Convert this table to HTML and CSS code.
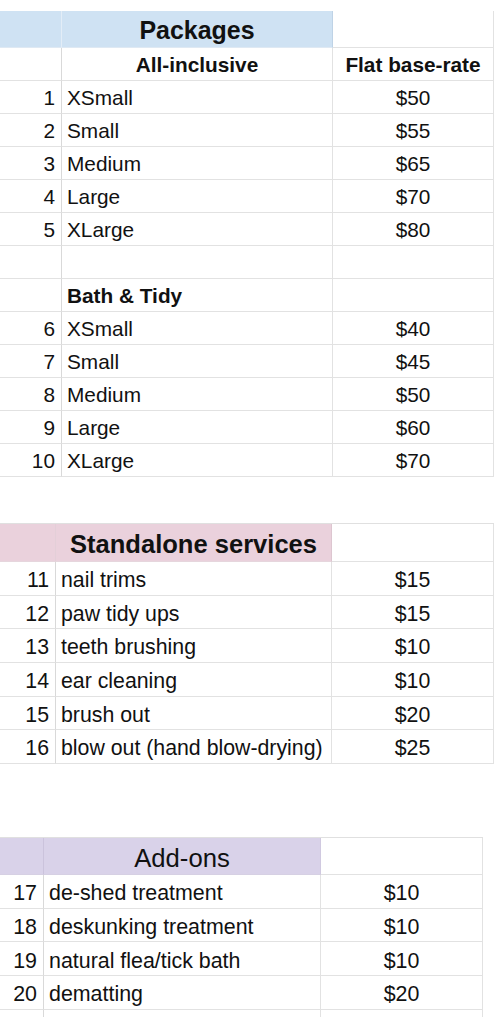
FILE: index.html
```html
<!DOCTYPE html>
<html lang="en">
<head>
<meta charset="utf-8">
<title>Grooming prices</title>
<link rel="stylesheet" href="styles.css">
</head>
<body>
<div class="sheet">
  <section class="block block--packages">
    <div class="cell num fill-blue head-div-blue"></div>
    <div class="cell title fill-blue edge-blue">Packages</div>
    <div class="cell price"></div>

    <div class="cell num"></div>
    <div class="cell sub">All-inclusive</div>
    <div class="cell sub">Flat base-rate</div>

    <div class="cell num">1</div><div class="cell label">XSmall</div><div class="cell price">$50</div>
    <div class="cell num">2</div><div class="cell label">Small</div><div class="cell price">$55</div>
    <div class="cell num">3</div><div class="cell label">Medium</div><div class="cell price">$65</div>
    <div class="cell num">4</div><div class="cell label">Large</div><div class="cell price">$70</div>
    <div class="cell num">5</div><div class="cell label">XLarge</div><div class="cell price">$80</div>

    <div class="cell num"></div><div class="cell label"></div><div class="cell price"></div>
    <div class="cell num"></div><div class="cell label strong">Bath &amp; Tidy</div><div class="cell price"></div>

    <div class="cell num">6</div><div class="cell label">XSmall</div><div class="cell price">$40</div>
    <div class="cell num">7</div><div class="cell label">Small</div><div class="cell price">$45</div>
    <div class="cell num">8</div><div class="cell label">Medium</div><div class="cell price">$50</div>
    <div class="cell num">9</div><div class="cell label">Large</div><div class="cell price">$60</div>
    <div class="cell num">10</div><div class="cell label">XLarge</div><div class="cell price">$70</div>
  </section>

  <section class="block block--standalone">
    <div class="cell num fill-pink head-div-pink"></div>
    <div class="cell title fill-pink edge-pink">Standalone services</div>
    <div class="cell price"></div>

    <div class="cell num">11</div><div class="cell label">nail trims</div><div class="cell price">$15</div>
    <div class="cell num">12</div><div class="cell label">paw tidy ups</div><div class="cell price">$15</div>
    <div class="cell num">13</div><div class="cell label">teeth brushing</div><div class="cell price">$10</div>
    <div class="cell num">14</div><div class="cell label">ear cleaning</div><div class="cell price">$10</div>
    <div class="cell num">15</div><div class="cell label">brush out</div><div class="cell price">$20</div>
    <div class="cell num">16</div><div class="cell label">blow out (hand blow-drying)</div><div class="cell price">$25</div>
  </section>

  <section class="block block--addons">
    <div class="cell num fill-purple head-div-purple"></div>
    <div class="cell title title--plain fill-purple edge-purple">Add-ons</div>
    <div class="cell price"></div>

    <div class="cell num">17</div><div class="cell label">de-shed treatment</div><div class="cell price">$10</div>
    <div class="cell num">18</div><div class="cell label">deskunking treatment</div><div class="cell price">$10</div>
    <div class="cell num">19</div><div class="cell label">natural flea/tick bath</div><div class="cell price">$10</div>
    <div class="cell num">20</div><div class="cell label">dematting</div><div class="cell price">$20</div>

    <div class="cell num stub"></div><div class="cell label stub"></div><div class="cell price stub"></div>
  </section>
</div>
</body>
</html>
```

FILE: styles.css
```css
* {
  box-sizing: border-box;
}

body {
  margin: 0;
  background: #ffffff;
  font-family: "Liberation Sans", Arial, sans-serif;
  color: #111111;
}

.sheet {
  width: 496px;
  padding-top: 11px;
}

.block {
  display: grid;
  width: max-content;
}

.block--packages {
  grid-template-columns: 62px 271px 161px;
  grid-template-rows: 37px;
  grid-auto-rows: 33px;
  font-size: 20.8px;
}

.block--standalone {
  margin-top: 46px;
  grid-template-columns: 56px 276px 162px;
  grid-template-rows: 38px;
  grid-auto-rows: 33.67px;
  font-size: 21.3px;
  border-top: 1px solid #e0e0e0;
}

.block--addons {
  margin-top: 73px;
  grid-template-columns: 44px 277px 162px;
  grid-template-rows: 37px repeat(4, 33.75px) 7px;
  font-size: 21.4px;
  border-top: 1px solid #e0e0e0;
}

.cell {
  display: flex;
  align-items: center;
  padding-top: 2px;
  line-height: 1;
  white-space: nowrap;
  border-right: 1px solid #e2e2e2;
  border-bottom: 1px solid #e2e2e2;
}

.block--standalone .cell,
.block--addons .cell {
  padding-top: 5px;
}

.num {
  justify-content: flex-end;
  padding-right: 6px;
  border-right-color: #d9d9d9;
}

.label {
  padding-left: 5px;
}

.strong {
  font-weight: bold;
}

.price {
  justify-content: center;
}

.sub {
  justify-content: center;
  font-weight: bold;
}

.title {
  justify-content: center;
  font-weight: bold;
  font-size: 1.2em;
}

.title--plain {
  font-weight: normal;
}

.block--addons .stub {
  border-bottom: none;
  padding-top: 0;
}

.fill-blue {
  background: #cfe2f3;
  border-bottom-color: #dfe9f3;
}

.fill-pink {
  background: #ead1dc;
  border-bottom-color: #e6d6dd;
}

.fill-purple {
  background: #d9d2e9;
  border-bottom-color: #d6d0e3;
}

.head-div-blue {
  border-right-color: #e3edf7;
}

.head-div-pink {
  border-right-color: #e3cfd8;
}

.head-div-purple {
  border-right-color: #cbc3dc;
}

.edge-blue {
  border-right-color: #bfd3e6;
}

.edge-pink {
  border-right-color: #ddc6d0;
}

.edge-purple {
  border-right-color: #d0c9e0;
}
```
